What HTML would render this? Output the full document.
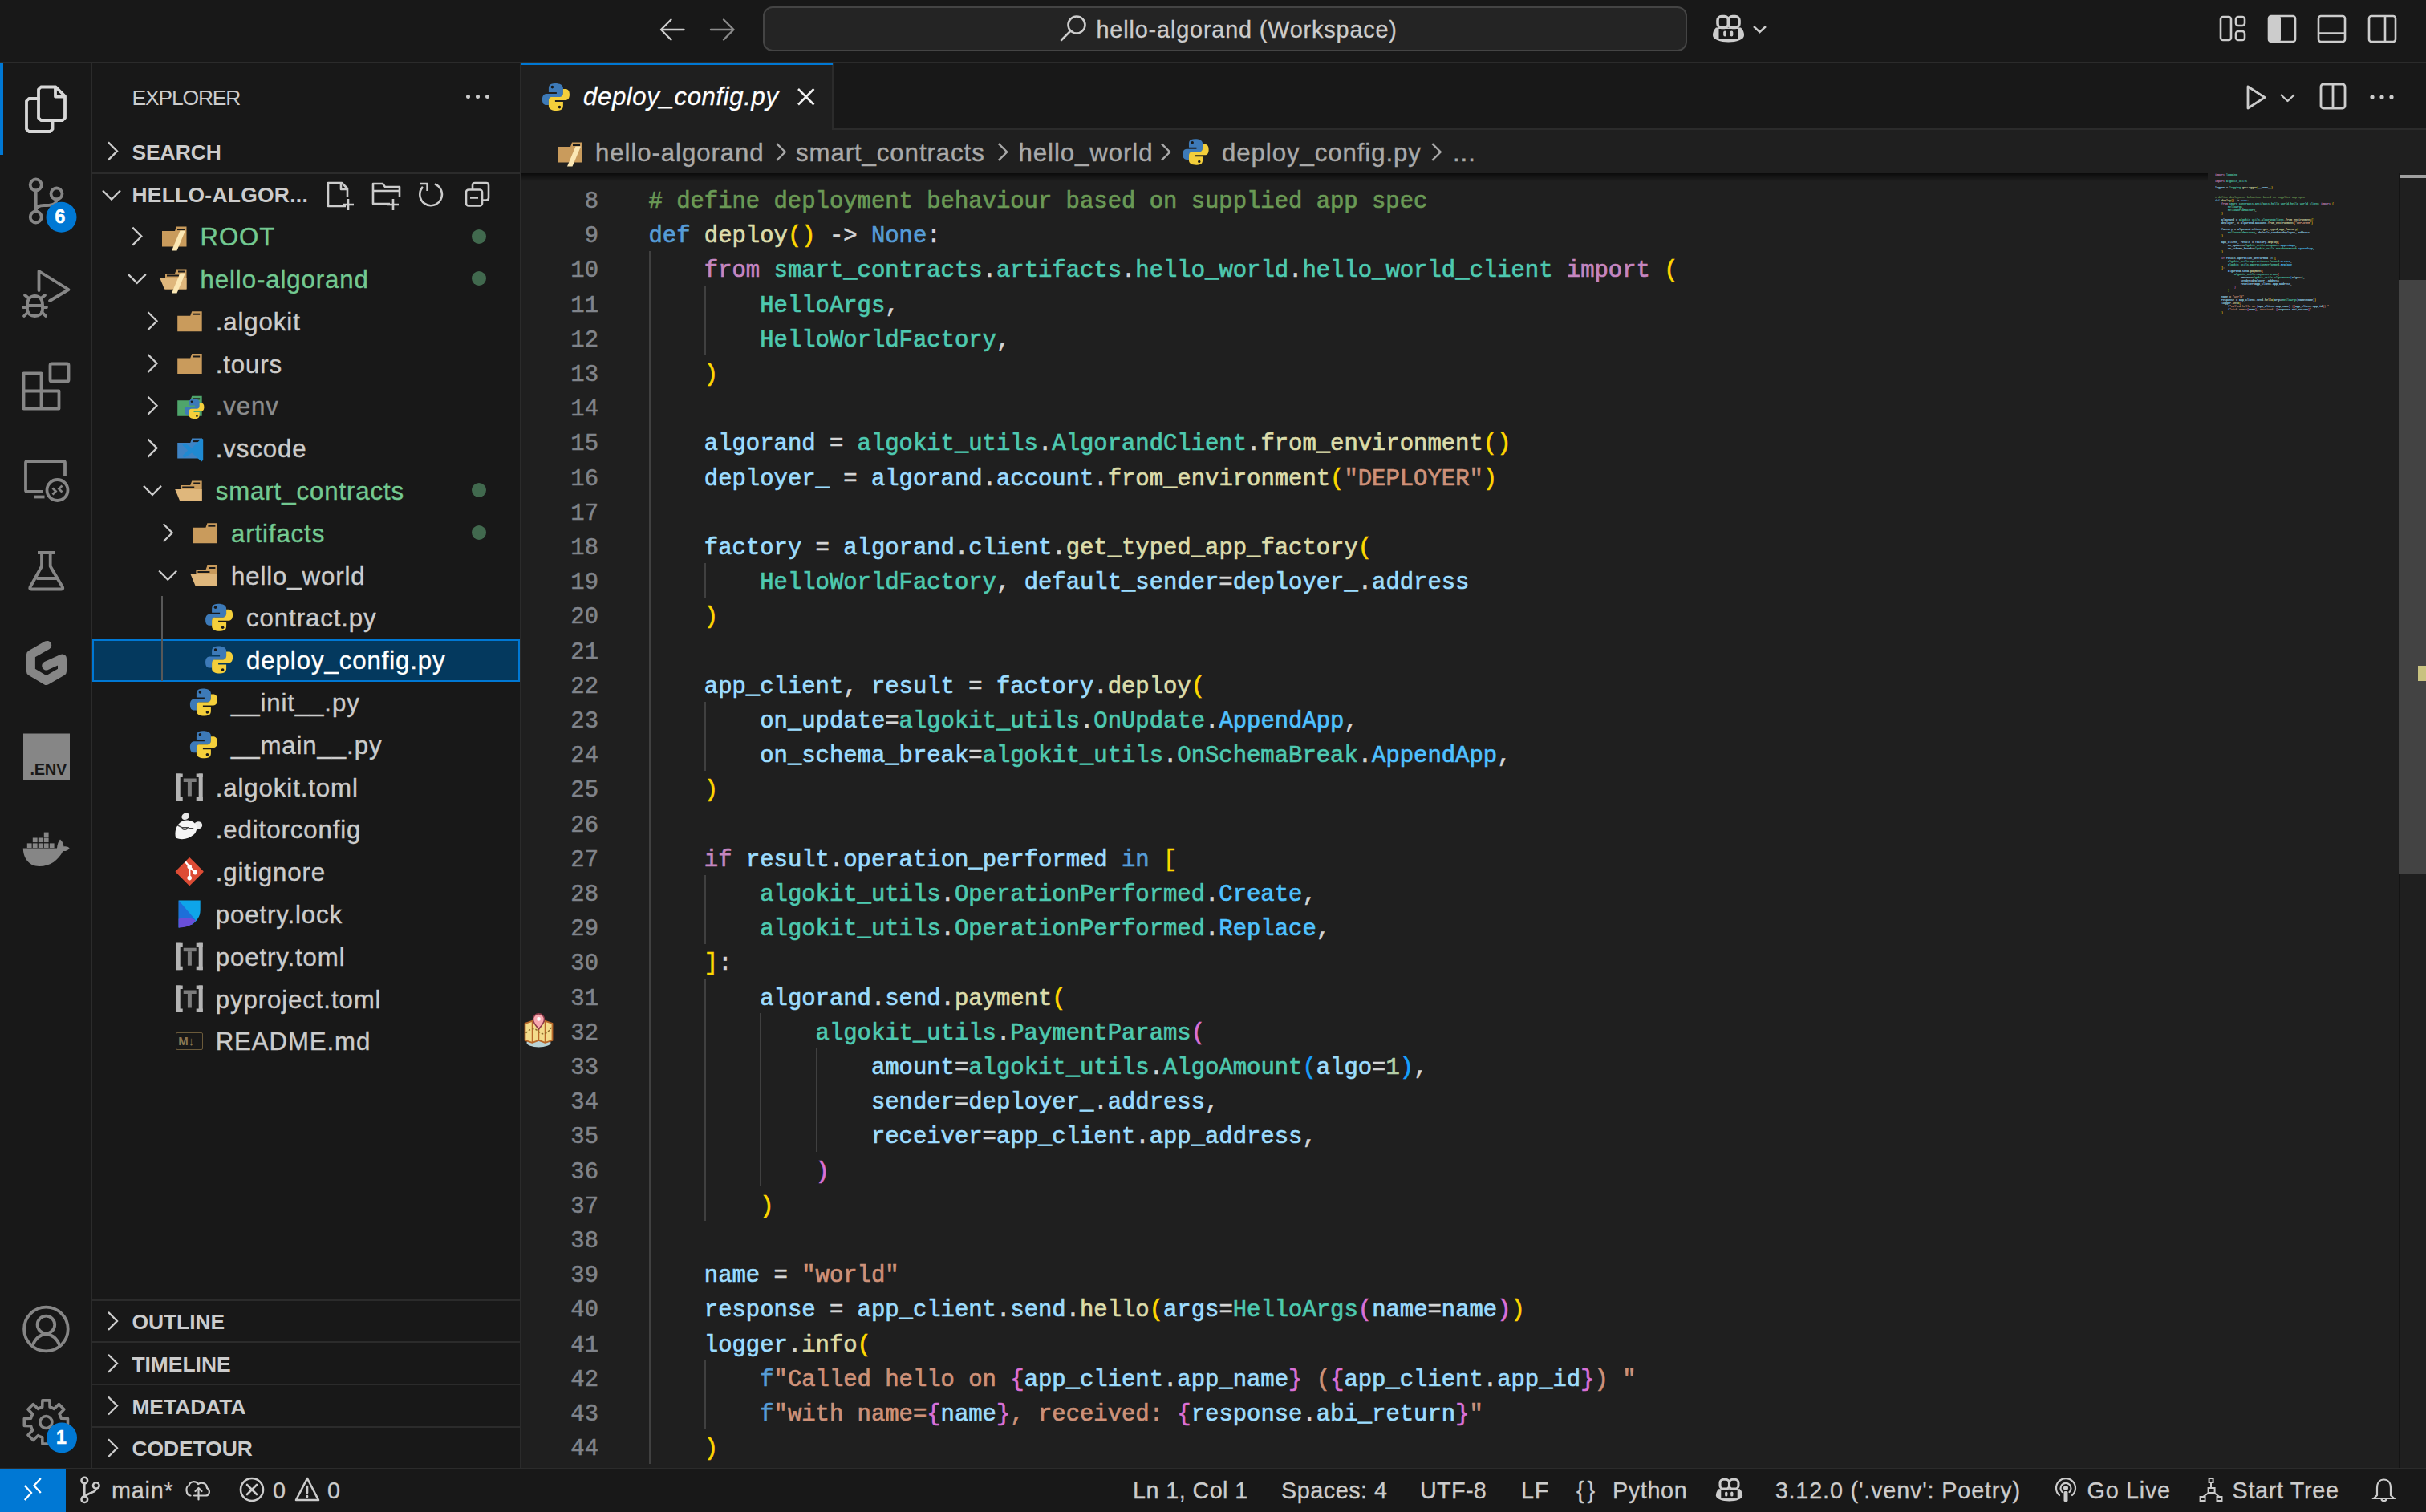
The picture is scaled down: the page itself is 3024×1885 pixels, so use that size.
<!DOCTYPE html>
<html><head><meta charset="utf-8"><title>VS Code - deploy_config.py</title>
<style>
*{margin:0;padding:0;box-sizing:border-box}
html,body{width:3024px;height:1885px;overflow:hidden;background:#181818;font-family:"Liberation Sans", sans-serif;color:#cccccc}
.a{position:absolute}
.t{position:absolute;white-space:pre;line-height:1}
svg{position:absolute;overflow:visible}
.code{position:absolute;left:0;white-space:pre;font-family:"Liberation Mono", monospace;font-size:28.9px;line-height:43.2px;height:43.2px;color:#d4d4d4;-webkit-text-stroke:0.7px currentColor;padding-top:3.5px}
.ln{position:absolute;white-space:pre;font-family:"Liberation Mono", monospace;font-size:28.9px;line-height:43.2px;height:43.2px;color:#80848b;text-align:right;width:120px;-webkit-text-stroke:0.5px currentColor;padding-top:3.5px}
.row{position:absolute;left:0;width:533px;height:52.8px}
.lbl{position:absolute;white-space:pre;font-size:31.2px;letter-spacing:0.9px;line-height:52.8px;top:0;color:#cccccc;padding-top:2px;-webkit-text-stroke:0.4px currentColor}
.hdr{position:absolute;white-space:pre;font-size:26.4px;font-weight:bold;line-height:52.8px;color:#cccccc}
.sb{position:absolute;white-space:pre;font-size:28.8px;letter-spacing:0.8px;line-height:52px;top:1832px;color:#cccccc;-webkit-text-stroke:0.3px currentColor}
.k{color:#569cd6} .f{color:#dcdcaa} .c{color:#c586c0} .ty{color:#4ec9b0} .v{color:#9cdcfe} .s{color:#ce9178}
.n{color:#b5cea8} .b1{color:#ffd700} .b2{color:#da70d6} .b3{color:#179fff} .cm{color:#6a9955} .en{color:#4fc1ff}
</style></head>
<body>
<div class="a" style="left:0;top:0;width:3024px;height:77px;background:#181818"></div>
<div class="a" style="left:0;top:77px;width:3024px;height:2px;background:#2b2b2b"></div>
<div class="a" style="left:0;top:79px;width:113px;height:1751px;background:#181818"></div>
<div class="a" style="left:113px;top:79px;width:2px;height:1751px;background:#2b2b2b"></div>
<div class="a" style="left:115px;top:79px;width:533px;height:1751px;background:#181818"></div>
<div class="a" style="left:648px;top:79px;width:2px;height:1751px;background:#2b2b2b"></div>
<div class="a" style="left:650px;top:79px;width:2374px;height:83px;background:#181818"></div>
<div class="a" style="left:1038px;top:160px;width:1986px;height:2px;background:#2b2b2b"></div>
<div class="a" style="left:650px;top:79px;width:388px;height:83px;background:#1f1f1f"></div>
<div class="a" style="left:1037px;top:79px;width:2px;height:83px;background:#2b2b2b"></div>
<div class="a" style="left:650px;top:78px;width:388px;height:3px;background:#0078d4"></div>
<div class="a" style="left:650px;top:162px;width:2374px;height:1668px;background:#1f1f1f"></div>
<div class="a" style="left:0;top:1830px;width:3024px;height:2px;background:#2b2b2b"></div>
<div class="a" style="left:0;top:1832px;width:3024px;height:53px;background:#181818"></div>
<div class="a" style="left:0;top:1832px;width:82px;height:53px;background:#0078d4"></div>
<div class="a" style="left:808.5px;top:312.9px;width:2px;height:1512.0px;background:#404040"></div>
<div class="a" style="left:877.9px;top:356.1px;width:2px;height:86.4px;background:#404040"></div>
<div class="a" style="left:877.9px;top:701.7px;width:2px;height:43.2px;background:#404040"></div>
<div class="a" style="left:877.9px;top:874.5px;width:2px;height:86.4px;background:#404040"></div>
<div class="a" style="left:877.9px;top:1090.5px;width:2px;height:86.4px;background:#404040"></div>
<div class="a" style="left:877.9px;top:1220.1px;width:2px;height:302.4px;background:#404040"></div>
<div class="a" style="left:947.2px;top:1263.3px;width:2px;height:216.0px;background:#404040"></div>
<div class="a" style="left:1016.6px;top:1306.5px;width:2px;height:129.6px;background:#404040"></div>
<div class="a" style="left:877.9px;top:1695.3px;width:2px;height:86.4px;background:#404040"></div>
<div class="ln" style="left:626px;top:226.5px">8</div>
<div class="code" style="left:808.5px;top:226.5px"><span class="cm"># define deployment behaviour based on supplied app spec</span></div>
<div class="ln" style="left:626px;top:269.7px">9</div>
<div class="code" style="left:808.5px;top:269.7px"><span class="k">def</span> <span class="f">deploy</span><span class="b1">()</span> -&gt; <span class="k">None</span>:</div>
<div class="ln" style="left:626px;top:312.9px">10</div>
<div class="code" style="left:808.5px;top:312.9px">    <span class="c">from</span> <span class="ty">smart_contracts</span>.<span class="ty">artifacts</span>.<span class="ty">hello_world</span>.<span class="ty">hello_world_client</span> <span class="c">import</span> <span class="b1">(</span></div>
<div class="ln" style="left:626px;top:356.1px">11</div>
<div class="code" style="left:808.5px;top:356.1px">        <span class="ty">HelloArgs</span>,</div>
<div class="ln" style="left:626px;top:399.3px">12</div>
<div class="code" style="left:808.5px;top:399.3px">        <span class="ty">HelloWorldFactory</span>,</div>
<div class="ln" style="left:626px;top:442.5px">13</div>
<div class="code" style="left:808.5px;top:442.5px">    <span class="b1">)</span></div>
<div class="ln" style="left:626px;top:485.7px">14</div>
<div class="ln" style="left:626px;top:528.9px">15</div>
<div class="code" style="left:808.5px;top:528.9px">    <span class="v">algorand</span> = <span class="ty">algokit_utils</span>.<span class="ty">AlgorandClient</span>.<span class="f">from_environment</span><span class="b1">()</span></div>
<div class="ln" style="left:626px;top:572.1px">16</div>
<div class="code" style="left:808.5px;top:572.1px">    <span class="v">deployer_</span> = <span class="v">algorand</span>.<span class="v">account</span>.<span class="f">from_environment</span><span class="b1">(</span><span class="s">&quot;DEPLOYER&quot;</span><span class="b1">)</span></div>
<div class="ln" style="left:626px;top:615.3px">17</div>
<div class="ln" style="left:626px;top:658.5px">18</div>
<div class="code" style="left:808.5px;top:658.5px">    <span class="v">factory</span> = <span class="v">algorand</span>.<span class="v">client</span>.<span class="f">get_typed_app_factory</span><span class="b1">(</span></div>
<div class="ln" style="left:626px;top:701.7px">19</div>
<div class="code" style="left:808.5px;top:701.7px">        <span class="ty">HelloWorldFactory</span>, <span class="v">default_sender</span>=<span class="v">deployer_</span>.<span class="v">address</span></div>
<div class="ln" style="left:626px;top:744.9px">20</div>
<div class="code" style="left:808.5px;top:744.9px">    <span class="b1">)</span></div>
<div class="ln" style="left:626px;top:788.1px">21</div>
<div class="ln" style="left:626px;top:831.3px">22</div>
<div class="code" style="left:808.5px;top:831.3px">    <span class="v">app_client</span>, <span class="v">result</span> = <span class="v">factory</span>.<span class="f">deploy</span><span class="b1">(</span></div>
<div class="ln" style="left:626px;top:874.5px">23</div>
<div class="code" style="left:808.5px;top:874.5px">        <span class="v">on_update</span>=<span class="ty">algokit_utils</span>.<span class="ty">OnUpdate</span>.<span class="en">AppendApp</span>,</div>
<div class="ln" style="left:626px;top:917.7px">24</div>
<div class="code" style="left:808.5px;top:917.7px">        <span class="v">on_schema_break</span>=<span class="ty">algokit_utils</span>.<span class="ty">OnSchemaBreak</span>.<span class="en">AppendApp</span>,</div>
<div class="ln" style="left:626px;top:960.9px">25</div>
<div class="code" style="left:808.5px;top:960.9px">    <span class="b1">)</span></div>
<div class="ln" style="left:626px;top:1004.1px">26</div>
<div class="ln" style="left:626px;top:1047.3px">27</div>
<div class="code" style="left:808.5px;top:1047.3px">    <span class="c">if</span> <span class="v">result</span>.<span class="v">operation_performed</span> <span class="k">in</span> <span class="b1">[</span></div>
<div class="ln" style="left:626px;top:1090.5px">28</div>
<div class="code" style="left:808.5px;top:1090.5px">        <span class="ty">algokit_utils</span>.<span class="ty">OperationPerformed</span>.<span class="en">Create</span>,</div>
<div class="ln" style="left:626px;top:1133.7px">29</div>
<div class="code" style="left:808.5px;top:1133.7px">        <span class="ty">algokit_utils</span>.<span class="ty">OperationPerformed</span>.<span class="en">Replace</span>,</div>
<div class="ln" style="left:626px;top:1176.9px">30</div>
<div class="code" style="left:808.5px;top:1176.9px">    <span class="b1">]</span>:</div>
<div class="ln" style="left:626px;top:1220.1px">31</div>
<div class="code" style="left:808.5px;top:1220.1px">        <span class="v">algorand</span>.<span class="v">send</span>.<span class="f">payment</span><span class="b1">(</span></div>
<div class="ln" style="left:626px;top:1263.3px">32</div>
<div class="code" style="left:808.5px;top:1263.3px">            <span class="ty">algokit_utils</span>.<span class="ty">PaymentParams</span><span class="b2">(</span></div>
<div class="ln" style="left:626px;top:1306.5px">33</div>
<div class="code" style="left:808.5px;top:1306.5px">                <span class="v">amount</span>=<span class="ty">algokit_utils</span>.<span class="ty">AlgoAmount</span><span class="b3">(</span><span class="v">algo</span>=<span class="n">1</span><span class="b3">)</span>,</div>
<div class="ln" style="left:626px;top:1349.7px">34</div>
<div class="code" style="left:808.5px;top:1349.7px">                <span class="v">sender</span>=<span class="v">deployer_</span>.<span class="v">address</span>,</div>
<div class="ln" style="left:626px;top:1392.9px">35</div>
<div class="code" style="left:808.5px;top:1392.9px">                <span class="v">receiver</span>=<span class="v">app_client</span>.<span class="v">app_address</span>,</div>
<div class="ln" style="left:626px;top:1436.1px">36</div>
<div class="code" style="left:808.5px;top:1436.1px">            <span class="b2">)</span></div>
<div class="ln" style="left:626px;top:1479.3px">37</div>
<div class="code" style="left:808.5px;top:1479.3px">        <span class="b1">)</span></div>
<div class="ln" style="left:626px;top:1522.5px">38</div>
<div class="ln" style="left:626px;top:1565.7px">39</div>
<div class="code" style="left:808.5px;top:1565.7px">    <span class="v">name</span> = <span class="s">&quot;world&quot;</span></div>
<div class="ln" style="left:626px;top:1608.9px">40</div>
<div class="code" style="left:808.5px;top:1608.9px">    <span class="v">response</span> = <span class="v">app_client</span>.<span class="v">send</span>.<span class="f">hello</span><span class="b1">(</span><span class="v">args</span>=<span class="ty">HelloArgs</span><span class="b2">(</span><span class="v">name</span>=<span class="v">name</span><span class="b2">)</span><span class="b1">)</span></div>
<div class="ln" style="left:626px;top:1652.1px">41</div>
<div class="code" style="left:808.5px;top:1652.1px">    <span class="v">logger</span>.<span class="f">info</span><span class="b1">(</span></div>
<div class="ln" style="left:626px;top:1695.3px">42</div>
<div class="code" style="left:808.5px;top:1695.3px">        <span class="k">f</span><span class="s">&quot;Called hello on </span><span class="b2">{</span><span class="v">app_client</span>.<span class="v">app_name</span><span class="b2">}</span><span class="s"> (</span><span class="b2">{</span><span class="v">app_client</span>.<span class="v">app_id</span><span class="b2">}</span><span class="s">) &quot;</span></div>
<div class="ln" style="left:626px;top:1738.5px">43</div>
<div class="code" style="left:808.5px;top:1738.5px">        <span class="k">f</span><span class="s">&quot;with name=</span><span class="b2">{</span><span class="v">name</span><span class="b2">}</span><span class="s">, received: </span><span class="b2">{</span><span class="v">response</span>.<span class="v">abi_return</span><span class="b2">}</span><span class="s">&quot;</span></div>
<div class="ln" style="left:626px;top:1781.7px">44</div>
<div class="code" style="left:808.5px;top:1781.7px">    <span class="b1">)</span></div>
<div class="a" style="left:650px;top:216px;width:2102px;height:10px;background:linear-gradient(#0b0b0b,rgba(31,31,31,0))"></div>
<div class="a" style="left:115px;top:797.2px;width:533px;height:52.8px;background:#04395e;border:2px solid #0078d4"></div>
<div class="a" style="left:201px;top:743.4px;width:2px;height:105.6px;background:#585858"></div>
<svg style="left:0;top:0" width="1" height="1"><path d="M165.3 283.6 L176.3 294.6 L165.3 305.6" fill="none" stroke="#cccccc" stroke-width="2.3" stroke-linecap="butt" stroke-linejoin="miter"/></svg>
<svg style="left:0;top:0" width="1" height="1"><path d="M202.0 288.1 H218.0 L220.0 282.6 H232.5 V307.6 H202.0 Z" fill="#c99b5c"/><path d="M231.0 287.6 L220.5 312.6 L214.0 312.6 L224.5 287.6 Z" fill="#fbe7b4" stroke="none"/><path d="M221.0 286.1 H230.0" stroke="#1a1a1a" stroke-width="2"/></svg>
<div class="lbl" style="left:249.5px;top:268.2px;color:#73c991">ROOT</div>
<div class="a" style="left:588px;top:285.6px;width:18px;height:18px;border-radius:50%;background:#41694e"></div>
<svg style="left:0;top:0" width="1" height="1"><path d="M159.8 341.9 L170.8 352.9 L181.8 341.9" fill="none" stroke="#cccccc" stroke-width="2.3" stroke-linecap="butt" stroke-linejoin="miter"/></svg>
<svg style="left:0;top:0" width="1" height="1"><path d="M206.0 340.9 H218.0 L220.0 335.4 H232.5 V360.4 H206.0 Z" fill="#c99b5c"/><path d="M208.0 343.4 H223.0 M222.0 338.4 H230.0" stroke="#1a1a1a" stroke-width="2"/><path d="M199.0 345.9 H232.5 V360.4 H205.0 Z" fill="#dfb77c"/><path d="M231.0 340.4 L220.5 365.4 L214.0 365.4 L224.5 340.4 Z" fill="#fbe7b4"/></svg>
<div class="lbl" style="left:249.5px;top:321.0px;color:#73c991">hello-algorand</div>
<div class="a" style="left:588px;top:338.4px;width:18px;height:18px;border-radius:50%;background:#41694e"></div>
<svg style="left:0;top:0" width="1" height="1"><path d="M184.5 389.2 L195.5 400.2 L184.5 411.2" fill="none" stroke="#cccccc" stroke-width="2.3" stroke-linecap="butt" stroke-linejoin="miter"/></svg>
<svg style="left:0;top:0" width="1" height="1"><path d="M221.2 393.7 H237.2 L239.2 388.2 H251.7 V413.2 H221.2 Z" fill="#c99b5c"/><path d="M240.2 391.7 H249.2" stroke="#1a1a1a" stroke-width="2"/></svg>
<div class="lbl" style="left:268.7px;top:373.8px">.algokit</div>
<svg style="left:0;top:0" width="1" height="1"><path d="M184.5 442.0 L195.5 453.0 L184.5 464.0" fill="none" stroke="#cccccc" stroke-width="2.3" stroke-linecap="butt" stroke-linejoin="miter"/></svg>
<svg style="left:0;top:0" width="1" height="1"><path d="M221.2 446.5 H237.2 L239.2 441.0 H251.7 V466.0 H221.2 Z" fill="#c99b5c"/><path d="M240.2 444.5 H249.2" stroke="#1a1a1a" stroke-width="2"/></svg>
<div class="lbl" style="left:268.7px;top:426.6px">.tours</div>
<svg style="left:0;top:0" width="1" height="1"><path d="M184.5 494.8 L195.5 505.8 L184.5 516.8" fill="none" stroke="#cccccc" stroke-width="2.3" stroke-linecap="butt" stroke-linejoin="miter"/></svg>
<svg style="left:0;top:0" width="1" height="1"><path d="M221.2 499.3 H237.2 L239.2 493.8 H251.7 V518.8 H221.2 Z" fill="#4fa56b"/><path d="M240.2 497.3 H249.2" stroke="#1a1a1a" stroke-width="2"/></svg>
<svg style="left:0;top:0" width="1" height="1"><g transform="translate(242.2,509.8) scale(0.72)"><path d="M-1 -17 C-9 -17 -9 -13 -9 -10 V-6 H1 V-4 H-12 C-16 -4 -17 0 -17 3 C-17 8 -15 10 -12 10 H-9 V5 C-9 2 -7 0 -4 0 H5 C8 0 9 -2 9 -5 V-11 C9 -15 5 -17 -1 -17 Z" fill="#3d7ab8"/><path d="M1 17 C9 17 9 13 9 10 V6 H-1 V4 H12 C16 4 17 0 17 -3 C17 -8 15 -10 12 -10 H9 V-5 C9 -2 7 0 4 0 H-5 C-8 0 -9 2 -9 5 V11 C-9 15 -5 17 1 17 Z" fill="#f4cf3b"/><circle cx="-4.5" cy="-12.5" r="1.8" fill="#181818"/><circle cx="4.5" cy="12.5" r="1.8" fill="#181818"/></g></svg>
<div class="lbl" style="left:268.7px;top:479.4px;color:#8c8c8c">.venv</div>
<svg style="left:0;top:0" width="1" height="1"><path d="M184.5 547.6 L195.5 558.6 L184.5 569.6" fill="none" stroke="#cccccc" stroke-width="2.3" stroke-linecap="butt" stroke-linejoin="miter"/></svg>
<svg style="left:0;top:0" width="1" height="1"><path d="M221.2 552.1 H237.2 L239.2 546.6 H251.7 V571.6 H221.2 Z" fill="#3f83c4"/><path d="M240.2 550.1 H249.2" stroke="#1a1a1a" stroke-width="2"/></svg>
<svg style="left:0;top:0" width="1" height="1"><path d="M251.2 546.6 L239.2 558.6 L230.2 552.6 L227.2 554.6 L234.2 561.6 L227.2 568.6 L230.2 570.6 L239.2 564.6 L251.2 575.6 L253.2 573.6 V547.6 Z" fill="#1f8ad2"/></svg>
<div class="lbl" style="left:268.7px;top:532.2px">.vscode</div>
<svg style="left:0;top:0" width="1" height="1"><path d="M179.0 605.9 L190.0 616.9 L201.0 605.9" fill="none" stroke="#cccccc" stroke-width="2.3" stroke-linecap="butt" stroke-linejoin="miter"/></svg>
<svg style="left:0;top:0" width="1" height="1"><path d="M225.2 604.9 H237.2 L239.2 599.4 H251.7 V624.4 H225.2 Z" fill="#c99b5c"/><path d="M227.2 607.4 H242.2 M241.2 602.4 H249.2" stroke="#1a1a1a" stroke-width="2"/><path d="M218.2 609.9 H251.7 V624.4 H224.2 Z" fill="#dfb77c"/></svg>
<div class="lbl" style="left:268.7px;top:585.0px;color:#73c991">smart_contracts</div>
<div class="a" style="left:588px;top:602.4px;width:18px;height:18px;border-radius:50%;background:#41694e"></div>
<svg style="left:0;top:0" width="1" height="1"><path d="M203.7 653.2 L214.7 664.2 L203.7 675.2" fill="none" stroke="#cccccc" stroke-width="2.3" stroke-linecap="butt" stroke-linejoin="miter"/></svg>
<svg style="left:0;top:0" width="1" height="1"><path d="M240.4 657.7 H256.4 L258.4 652.2 H270.9 V677.2 H240.4 Z" fill="#c99b5c"/><path d="M259.4 655.7 H268.4" stroke="#1a1a1a" stroke-width="2"/></svg>
<div class="lbl" style="left:287.9px;top:637.8px;color:#73c991">artifacts</div>
<div class="a" style="left:588px;top:655.2px;width:18px;height:18px;border-radius:50%;background:#41694e"></div>
<svg style="left:0;top:0" width="1" height="1"><path d="M198.2 711.5 L209.2 722.5 L220.2 711.5" fill="none" stroke="#cccccc" stroke-width="2.3" stroke-linecap="butt" stroke-linejoin="miter"/></svg>
<svg style="left:0;top:0" width="1" height="1"><path d="M244.4 710.5 H256.4 L258.4 705.0 H270.9 V730.0 H244.4 Z" fill="#c99b5c"/><path d="M246.4 713.0 H261.4 M260.4 708.0 H268.4" stroke="#1a1a1a" stroke-width="2"/><path d="M237.4 715.5 H270.9 V730.0 H243.4 Z" fill="#dfb77c"/></svg>
<div class="lbl" style="left:287.9px;top:690.6px">hello_world</div>
<svg style="left:0;top:0" width="1" height="1"><g transform="translate(273.1,769.8) scale(1.0)"><path d="M-1 -17 C-9 -17 -9 -13 -9 -10 V-6 H1 V-4 H-12 C-16 -4 -17 0 -17 3 C-17 8 -15 10 -12 10 H-9 V5 C-9 2 -7 0 -4 0 H5 C8 0 9 -2 9 -5 V-11 C9 -15 5 -17 -1 -17 Z" fill="#3d7ab8"/><path d="M1 17 C9 17 9 13 9 10 V6 H-1 V4 H12 C16 4 17 0 17 -3 C17 -8 15 -10 12 -10 H9 V-5 C9 -2 7 0 4 0 H-5 C-8 0 -9 2 -9 5 V11 C-9 15 -5 17 1 17 Z" fill="#f4cf3b"/><circle cx="-4.5" cy="-12.5" r="1.8" fill="#181818"/><circle cx="4.5" cy="12.5" r="1.8" fill="#181818"/></g></svg>
<div class="lbl" style="left:307.1px;top:743.4px">contract.py</div>
<svg style="left:0;top:0" width="1" height="1"><g transform="translate(273.1,822.6) scale(1.0)"><path d="M-1 -17 C-9 -17 -9 -13 -9 -10 V-6 H1 V-4 H-12 C-16 -4 -17 0 -17 3 C-17 8 -15 10 -12 10 H-9 V5 C-9 2 -7 0 -4 0 H5 C8 0 9 -2 9 -5 V-11 C9 -15 5 -17 -1 -17 Z" fill="#3d7ab8"/><path d="M1 17 C9 17 9 13 9 10 V6 H-1 V4 H12 C16 4 17 0 17 -3 C17 -8 15 -10 12 -10 H9 V-5 C9 -2 7 0 4 0 H-5 C-8 0 -9 2 -9 5 V11 C-9 15 -5 17 1 17 Z" fill="#f4cf3b"/><circle cx="-4.5" cy="-12.5" r="1.8" fill="#181818"/><circle cx="4.5" cy="12.5" r="1.8" fill="#181818"/></g></svg>
<div class="lbl" style="left:307.1px;top:796.2px;color:#ffffff">deploy_config.py</div>
<svg style="left:0;top:0" width="1" height="1"><g transform="translate(253.9,875.4) scale(1.0)"><path d="M-1 -17 C-9 -17 -9 -13 -9 -10 V-6 H1 V-4 H-12 C-16 -4 -17 0 -17 3 C-17 8 -15 10 -12 10 H-9 V5 C-9 2 -7 0 -4 0 H5 C8 0 9 -2 9 -5 V-11 C9 -15 5 -17 -1 -17 Z" fill="#3d7ab8"/><path d="M1 17 C9 17 9 13 9 10 V6 H-1 V4 H12 C16 4 17 0 17 -3 C17 -8 15 -10 12 -10 H9 V-5 C9 -2 7 0 4 0 H-5 C-8 0 -9 2 -9 5 V11 C-9 15 -5 17 1 17 Z" fill="#f4cf3b"/><circle cx="-4.5" cy="-12.5" r="1.8" fill="#181818"/><circle cx="4.5" cy="12.5" r="1.8" fill="#181818"/></g></svg>
<div class="lbl" style="left:287.9px;top:849.0px">__init__.py</div>
<svg style="left:0;top:0" width="1" height="1"><g transform="translate(253.9,928.2) scale(1.0)"><path d="M-1 -17 C-9 -17 -9 -13 -9 -10 V-6 H1 V-4 H-12 C-16 -4 -17 0 -17 3 C-17 8 -15 10 -12 10 H-9 V5 C-9 2 -7 0 -4 0 H5 C8 0 9 -2 9 -5 V-11 C9 -15 5 -17 -1 -17 Z" fill="#3d7ab8"/><path d="M1 17 C9 17 9 13 9 10 V6 H-1 V4 H12 C16 4 17 0 17 -3 C17 -8 15 -10 12 -10 H9 V-5 C9 -2 7 0 4 0 H-5 C-8 0 -9 2 -9 5 V11 C-9 15 -5 17 1 17 Z" fill="#f4cf3b"/><circle cx="-4.5" cy="-12.5" r="1.8" fill="#181818"/><circle cx="4.5" cy="12.5" r="1.8" fill="#181818"/></g></svg>
<div class="lbl" style="left:287.9px;top:901.8px">__main__.py</div>
<svg style="left:0;top:0" width="1" height="1"><g fill="#b4b4b4"><rect x="219.7" y="964.5" width="5" height="33.5"/><rect x="219.7" y="964.5" width="8" height="4.5"/><rect x="219.7" y="993.5" width="8" height="4.5"/><rect x="247.7" y="964.5" width="5" height="33.5"/><rect x="244.7" y="964.5" width="8" height="4.5"/><rect x="244.7" y="993.5" width="8" height="4.5"/></g><g fill="#7c7c7c"><rect x="228.7" y="970.5" width="16" height="4.5"/><rect x="233.9" y="975.0" width="5" height="17.5"/></g></svg>
<div class="lbl" style="left:268.7px;top:954.6px">.algokit.toml</div>
<svg style="left:0;top:0" width="1" height="1"><g transform="translate(233.2,1033.8)"><ellipse cx="-2" cy="-16" rx="5" ry="4" transform="rotate(-30 -2 -16)" fill="#e8e8e8"/><ellipse cx="14" cy="-5" rx="5" ry="4.5" fill="#e8e8e8"/><path d="M-14 11 C-16 4 -14 -6 -6 -10 C0 -13 8 -10 11 -6 C13 -2 12 4 8 7 C2 12 -6 14 -14 11 Z" fill="#f5f5f5"/><path d="M-12 -5 L-6 -2 H2 M-6 -2 A3 2.5 0 1 0 0 -2 M2 -1 H8" stroke="#444" stroke-width="1.4" fill="none"/></g></svg>
<div class="lbl" style="left:268.7px;top:1007.4px">.editorconfig</div>
<svg style="left:0;top:0" width="1" height="1"><path d="M236.2 1070.1 L252.7 1086.6 L236.2 1103.1 L219.7 1086.6 Z" fill="#dd4c35" stroke="#dd4c35" stroke-width="2" stroke-linejoin="round"/><g stroke="#fff" stroke-width="2.4" fill="#fff"><path d="M231.2 1074.6 L236.2 1080.6 V1094.6 M236.2 1080.6 L243.2 1087.6" fill="none"/><circle cx="236.2" cy="1080.6" r="1.6"/><circle cx="236.2" cy="1094.6" r="1.6"/><circle cx="243.2" cy="1087.6" r="1.6"/></g></svg>
<div class="lbl" style="left:268.7px;top:1060.2px">.gitignore</div>
<svg style="left:0;top:0" width="1" height="1"><g transform="translate(236.2,1139.4)"><path d="M-13.5 -17 H13.5 V-5 C13.5 3 9 9 3 13 L-13.5 17 Z" fill="#0ea5e9"/><path d="M-13.5 -17 L8 8 L3 13 L-13.5 17 Z" fill="#1e6fd9"/><path d="M-13.5 6 C-5 4 2 5 8 8 L3 13 C-3 16 -9 17 -13.5 17 Z" fill="#6a4fd8"/></g></svg>
<div class="lbl" style="left:268.7px;top:1113.0px">poetry.lock</div>
<svg style="left:0;top:0" width="1" height="1"><g fill="#b4b4b4"><rect x="219.7" y="1175.7" width="5" height="33.5"/><rect x="219.7" y="1175.7" width="8" height="4.5"/><rect x="219.7" y="1204.7" width="8" height="4.5"/><rect x="247.7" y="1175.7" width="5" height="33.5"/><rect x="244.7" y="1175.7" width="8" height="4.5"/><rect x="244.7" y="1204.7" width="8" height="4.5"/></g><g fill="#7c7c7c"><rect x="228.7" y="1181.7" width="16" height="4.5"/><rect x="233.9" y="1186.2" width="5" height="17.5"/></g></svg>
<div class="lbl" style="left:268.7px;top:1165.8px">poetry.toml</div>
<svg style="left:0;top:0" width="1" height="1"><g fill="#b4b4b4"><rect x="219.7" y="1228.5" width="5" height="33.5"/><rect x="219.7" y="1228.5" width="8" height="4.5"/><rect x="219.7" y="1257.5" width="8" height="4.5"/><rect x="247.7" y="1228.5" width="5" height="33.5"/><rect x="244.7" y="1228.5" width="8" height="4.5"/><rect x="244.7" y="1257.5" width="8" height="4.5"/></g><g fill="#7c7c7c"><rect x="228.7" y="1234.5" width="16" height="4.5"/><rect x="233.9" y="1239.0" width="5" height="17.5"/></g></svg>
<div class="lbl" style="left:268.7px;top:1218.6px">pyproject.toml</div>
<div class="a" style="left:219.2px;top:1286.8px;width:34px;height:22px;border:1.5px solid #6b5a3a;border-radius:2px"></div>
<div class="t" style="left:222.2px;top:1289.8px;font-size:15px;font-weight:bold;color:#8a7550">M&#8595;</div>
<div class="lbl" style="left:268.7px;top:1271.4px">README.md</div>
<div class="t" style="left:164.4px;top:108.5px;font-size:26.4px;letter-spacing:-1.1px;color:#cccccc">EXPLORER</div>
<div class="a" style="left:580.9px;top:118.2px;width:5.2px;height:5.2px;border-radius:50%;background:#cccccc"></div>
<div class="a" style="left:593.1px;top:118.2px;width:5.2px;height:5.2px;border-radius:50%;background:#cccccc"></div>
<div class="a" style="left:605.0px;top:118.2px;width:5.2px;height:5.2px;border-radius:50%;background:#cccccc"></div>
<svg style="left:0;top:0" width="1" height="1"><path d="M135.0 177.4 L146.0 188.4 L135.0 199.4" fill="none" stroke="#cccccc" stroke-width="2.3" stroke-linecap="butt" stroke-linejoin="miter"/></svg>
<div class="hdr" style="left:164.4px;top:164px">SEARCH</div>
<div class="a" style="left:115px;top:215px;width:533px;height:2px;background:#2b2b2b"></div>
<svg style="left:0;top:0" width="1" height="1"><path d="M128.0 237.5 L139.0 248.5 L150.0 237.5" fill="none" stroke="#cccccc" stroke-width="2.3" stroke-linecap="butt" stroke-linejoin="miter"/></svg>
<div class="hdr" style="left:164.4px;top:217px;letter-spacing:0.3px">HELLO-ALGOR...</div>
<svg style="left:0;top:0" width="1" height="1"><g fill="none" stroke="#cccccc" stroke-width="2.6" stroke-linejoin="round">
<path d="M431 257 H409 V228 H426 L433 235 V246"/><path d="M425 228 V236 H433"/>
<path d="M434 248 V262 M427 255 H441"/>
<path d="M486 254 H465 V229 H477 L480 233 H498 V246"/><path d="M465 238 H498"/>
<path d="M490 248 V262 M483 255 H497"/>
<path d="M542 229.5 A13.8 13.8 0 1 1 527 233"/><path d="M524 229 H532.6 V238"/>
<rect x="581" y="236.5" width="20" height="20" rx="3"/><path d="M589 236.5 V231 Q589 228 592 228 H606 Q609 228 609 231 V246.5 Q609 249.5 606 249.5 H601 M586 246.5 H596"/>
</g></svg>
<div class="a" style="left:115px;top:1619.5px;width:533px;height:2px;background:#2b2b2b"></div>
<svg style="left:0;top:0" width="1" height="1"><path d="M135.0 1635.9 L146.0 1646.9 L135.0 1657.9" fill="none" stroke="#cccccc" stroke-width="2.3" stroke-linecap="butt" stroke-linejoin="miter"/></svg>
<div class="hdr" style="left:164.4px;top:1622.0px">OUTLINE</div>
<div class="a" style="left:115px;top:1672.3px;width:533px;height:2px;background:#2b2b2b"></div>
<svg style="left:0;top:0" width="1" height="1"><path d="M135.0 1688.7 L146.0 1699.7 L135.0 1710.7" fill="none" stroke="#cccccc" stroke-width="2.3" stroke-linecap="butt" stroke-linejoin="miter"/></svg>
<div class="hdr" style="left:164.4px;top:1674.8px">TIMELINE</div>
<div class="a" style="left:115px;top:1725.1px;width:533px;height:2px;background:#2b2b2b"></div>
<svg style="left:0;top:0" width="1" height="1"><path d="M135.0 1741.5 L146.0 1752.5 L135.0 1763.5" fill="none" stroke="#cccccc" stroke-width="2.3" stroke-linecap="butt" stroke-linejoin="miter"/></svg>
<div class="hdr" style="left:164.4px;top:1727.6px">METADATA</div>
<div class="a" style="left:115px;top:1777.9px;width:533px;height:2px;background:#2b2b2b"></div>
<svg style="left:0;top:0" width="1" height="1"><path d="M135.0 1794.3 L146.0 1805.3 L135.0 1816.3" fill="none" stroke="#cccccc" stroke-width="2.3" stroke-linecap="butt" stroke-linejoin="miter"/></svg>
<div class="hdr" style="left:164.4px;top:1780.4px">CODETOUR</div>
<div class="a" style="left:0;top:78px;width:4px;height:115px;background:#0078d4"></div>
<svg style="left:0;top:0" width="1" height="1"><g fill="none" stroke-width="3.8" stroke-linejoin="round" stroke-linecap="round">
<path stroke="#d7d7d7" d="M48 111.5 L51 108.5 H69.5 L81 120 V147 L78 150 H51 L48 147 Z M69 109 V120.5 H81"/>
<path stroke="#d7d7d7" d="M48 123 H36 L33 126 V161 L36 164 H62.5 L65.5 161 V150"/>
<g stroke="#868686">
<circle cx="44.7" cy="230.5" r="7"/><circle cx="70.5" cy="241.5" r="7"/><circle cx="44.7" cy="270.5" r="7"/>
<path d="M44.7 237.5 V263.5 M70.5 248.5 C70.5 256 62 256 55 256 C48 256 44.7 258 44.7 263"/>
<path d="M48.5 338 V362 M48.5 338 L85.5 361 L62 375"/>
<path d="M34 380 C34 373 38 369 43.5 369 C49 369 53 373 53 380 V386 C53 391 49 394 43.5 394 C38 394 34 391 34 386 Z"/><path d="M34 381 H53 M34 383 H29 M53 383 H58 M35 389 L30 394 M52 389 L57 394 M36 372 L31 368 M51 372 L56 368"/>
<path d="M29.5 465.5 H51.5 V487.5 H73.5 V509.5 H29.5 Z M29.5 487.5 H51.5 V509.5"/><rect x="62.5" y="453.5" width="23" height="22" rx="2"/>
<path d="M53.5 613 H34 Q32 613 32 611 V577 Q32 575 34 575 H79 Q81 575 81 577 V594" stroke-linecap="butt"/><path d="M42 619.5 H55.5" stroke-linecap="butt"/>
<circle cx="71.5" cy="611" r="13"/><path d="M65.5 608.5 L69.5 612.5 L65.5 616.5 M77.5 605.5 L73.5 609.5 L77.5 613.5" stroke-width="2.8" stroke-linecap="butt" stroke-linejoin="miter"/>
<path d="M47 689 H68.5 M52 689 V706 L37.5 732 Q36.5 734.5 39 734.5 H76.5 Q79 734.5 78 732 L62.7 706 V689 M45.5 721 H70.5" stroke-linecap="butt"/>
<circle cx="57.4" cy="1657" r="27.3"/><circle cx="57.4" cy="1651.5" r="10.8"/><path d="M40.5 1677.5 C44 1669 50 1663.5 57.4 1663.5 C64.8 1663.5 71 1669 74.5 1677.5"/>
<path d="M49.9 1755.0 L52.7 1754.1 L52.9 1745.9 L61.9 1745.9 L62.1 1754.1 L64.9 1755.0 L67.4 1756.3 L73.4 1750.6 L79.8 1757.0 L74.1 1763.0 L75.4 1765.5 L76.3 1768.3 L84.5 1768.5 L84.5 1777.5 L76.3 1777.7 L75.4 1780.5 L74.1 1783.0 L79.8 1789.0 L73.4 1795.4 L67.4 1789.7 L64.9 1791.0 L62.1 1791.9 L61.9 1800.1 L52.9 1800.1 L52.7 1791.9 L49.9 1791.0 L47.4 1789.7 L41.4 1795.4 L35.0 1789.0 L40.7 1783.0 L39.4 1780.5 L38.5 1777.7 L30.3 1777.5 L30.3 1768.5 L38.5 1768.3 L39.4 1765.5 L40.7 1763.0 L35.0 1757.0 L41.4 1750.6 L47.4 1756.3 Z" stroke-width="3.6"/><circle cx="57.4" cy="1773" r="7.5" stroke-width="3.6"/>
</g></g>
<path fill="none" stroke="#868686" stroke-width="11" stroke-linecap="round" stroke-linejoin="round" d="M58.7 804.4 L38.4 816 V837 L57.7 848.5 L77.5 837 V821 L57.7 830"/>
<rect x="29" y="914.5" width="58" height="58" fill="#868686"/>
<path fill="#868686" d="M28.8 1057.6 H71 C71.5 1052 73 1048.5 75 1046.5 C78 1049 79 1052.5 79.5 1055.5 C82 1055 85 1055.5 86.6 1057.5 C84.5 1060.5 81.5 1061.5 78.5 1061 C73 1072 63 1080 48.9 1080 C36 1080 29 1070 28.8 1057.6 Z"/>
<g fill="#868686"><rect x="33.8" y="1051.4" width="5.8" height="5.6"/><rect x="40.8" y="1051.4" width="5.8" height="5.6"/><rect x="47.8" y="1051.4" width="5.8" height="5.6"/><rect x="54.8" y="1051.4" width="5.8" height="5.6"/><rect x="61.8" y="1051.4" width="5.8" height="5.6"/><rect x="40.8" y="1044.5" width="5.8" height="5.6"/><rect x="47.8" y="1044.5" width="5.8" height="5.6"/><rect x="54.8" y="1044.5" width="5.8" height="5.6"/><rect x="54.8" y="1037.6" width="5.8" height="5.6"/></g>
<circle cx="76.5" cy="270.7" r="19" fill="#0078d4"/>
<circle cx="77" cy="1792.5" r="19" fill="#0078d4"/>
</svg>
<div class="t" style="left:37.5px;top:948.5px;font-size:20px;font-weight:bold;color:#181818;letter-spacing:-0.3px">.ENV</div>
<div class="t" style="left:68.5px;top:259px;font-size:23px;font-weight:bold;color:#ffffff;-webkit-text-stroke:0.6px #fff">6</div>
<div class="t" style="left:70px;top:1781px;font-size:23px;font-weight:bold;color:#ffffff;-webkit-text-stroke:0.6px #fff">1</div>
<svg style="left:0;top:0" width="1" height="1"><g fill="none" stroke-width="2.8" stroke-linecap="round" stroke-linejoin="round">
<path stroke="#cccccc" stroke-width="2.4" d="M824 37 H852.5 M836.5 24.5 L824 37 L836.5 49.5"/>
<path stroke="#8b8b8b" stroke-width="2.4" d="M886 37 H914.5 M902 24.5 L914.5 37 L902 49.5"/>
</g></svg>
<div class="a" style="left:951px;top:8px;width:1152px;height:56px;border-radius:12px;background:#242424;border:2px solid #444444"></div>
<svg style="left:0;top:0" width="1" height="1"><g fill="none" stroke="#cccccc" stroke-width="2.6" stroke-linecap="round"><circle cx="1342" cy="31" r="10.5"/><path d="M1334.5 38.5 L1323 50"/></g></svg>
<div class="t" style="left:1366.5px;top:23px;font-size:28.8px;letter-spacing:0.85px;color:#cccccc;-webkit-text-stroke:0.3px currentColor">hello-algorand (Workspace)</div>
<svg style="left:0;top:0" width="1" height="1"><g transform="translate(2154.5,35.5) scale(1.0)">
<path d="M-15.5 -1 C-18.5 2 -19.5 5 -19.5 8.5 C-19.5 14 -10 17 0 17 C10 17 19.5 14 19.5 8.5 C19.5 5 18.5 2 15.5 -1 Z" fill="#cccccc"/>
<rect x="-12" y="0.5" width="24" height="12.5" fill="#181818"/>
<rect x="-13.5" y="-15" width="13.5" height="14" rx="5" fill="none" stroke="#cccccc" stroke-width="3.6"/>
<rect x="0" y="-15" width="13.5" height="14" rx="5" fill="none" stroke="#cccccc" stroke-width="3.6"/>
<rect x="-6.3" y="3" width="3.8" height="7" rx="1.9" fill="#cccccc"/><rect x="2" y="3" width="3.8" height="7" rx="1.9" fill="#cccccc"/>
</g></svg>
<svg style="left:0;top:0" width="1" height="1"><path d="M2186 33 L2193.5 40 L2201 33" fill="none" stroke="#cccccc" stroke-width="2.4"/></svg>
<svg style="left:0;top:0" width="1" height="1"><g fill="none" stroke="#cccccc" stroke-width="2.6" stroke-linejoin="round">
<rect x="2768" y="21" width="13" height="29" rx="3"/><rect x="2787" y="21" width="11" height="11" rx="3"/><rect x="2787" y="39" width="11" height="11" rx="3"/>
<rect x="2828" y="20" width="33" height="32" rx="3"/>
<rect x="2890" y="20" width="33" height="32" rx="3"/><path d="M2890 41.5 H2923"/>
<rect x="2953" y="20" width="33" height="32" rx="3"/><path d="M2973 20 V52"/>
</g><rect x="2828" y="20" width="15" height="32" rx="3" fill="#cccccc"/></svg>
<svg style="left:0;top:0" width="1" height="1"><g transform="translate(692.9,121.1) scale(1.0)"><path d="M-1 -17 C-9 -17 -9 -13 -9 -10 V-6 H1 V-4 H-12 C-16 -4 -17 0 -17 3 C-17 8 -15 10 -12 10 H-9 V5 C-9 2 -7 0 -4 0 H5 C8 0 9 -2 9 -5 V-11 C9 -15 5 -17 -1 -17 Z" fill="#3d7ab8"/><path d="M1 17 C9 17 9 13 9 10 V6 H-1 V4 H12 C16 4 17 0 17 -3 C17 -8 15 -10 12 -10 H9 V-5 C9 -2 7 0 4 0 H-5 C-8 0 -9 2 -9 5 V11 C-9 15 -5 17 1 17 Z" fill="#f4cf3b"/><circle cx="-4.5" cy="-12.5" r="1.8" fill="#181818"/><circle cx="4.5" cy="12.5" r="1.8" fill="#181818"/></g></svg>
<div class="t" style="left:727px;top:105px;font-size:31.2px;font-style:italic;letter-spacing:0.6px;color:#ffffff;-webkit-text-stroke:0.3px currentColor">deploy_config.py</div>
<svg style="left:0;top:0" width="1" height="1"><path d="M995 111 L1014.5 130.5 M1014.5 111 L995 130.5" stroke="#f0f0f0" stroke-width="2.6" stroke-linecap="butt"/></svg>
<svg style="left:0;top:0" width="1" height="1"><g fill="none" stroke="#cccccc" stroke-width="2.8" stroke-linejoin="round">
<path d="M2802 108 L2823 121.5 L2802 135 Z"/>
<path d="M2843 118 L2851.5 126 L2860 118" stroke-width="2.4"/>
<rect x="2893" y="105" width="30" height="30" rx="3"/><path d="M2908 105 V135"/>
</g><g fill="#cccccc"><circle cx="2957" cy="121" r="2.6"/><circle cx="2969" cy="121" r="2.6"/><circle cx="2981" cy="121" r="2.6"/></g></svg>
<svg style="left:0;top:0" width="1" height="1"><path d="M695.0 183.0 H711.0 L713.0 177.5 H725.5 V202.5 H695.0 Z" fill="#c99b5c"/><path d="M724.0 182.5 L713.5 207.5 L707.0 207.5 L717.5 182.5 Z" fill="#fbe7b4" stroke="none"/><path d="M714.0 181.0 H723.0" stroke="#1a1a1a" stroke-width="2"/></svg>
<div class="t" style="left:742px;top:175px;font-size:31.2px;letter-spacing:0.92px;color:#a9a9a9;-webkit-text-stroke:0.4px currentColor">hello-algorand</div>
<svg style="left:0;top:0" width="1" height="1"><path d="M968.3 179.1 L978.7 189.5 L968.3 199.9" fill="none" stroke="#a9a9a9" stroke-width="2.4" stroke-linecap="butt" stroke-linejoin="miter"/></svg>
<div class="t" style="left:992px;top:175px;font-size:31.2px;letter-spacing:0.92px;color:#a9a9a9;-webkit-text-stroke:0.4px currentColor">smart_contracts</div>
<svg style="left:0;top:0" width="1" height="1"><path d="M1244.8 179.1 L1255.2 189.5 L1244.8 199.9" fill="none" stroke="#a9a9a9" stroke-width="2.4" stroke-linecap="butt" stroke-linejoin="miter"/></svg>
<div class="t" style="left:1269.6px;top:175px;font-size:31.2px;letter-spacing:0.92px;color:#a9a9a9;-webkit-text-stroke:0.4px currentColor">hello_world</div>
<svg style="left:0;top:0" width="1" height="1"><path d="M1447.8 179.1 L1458.2 189.5 L1447.8 199.9" fill="none" stroke="#a9a9a9" stroke-width="2.4" stroke-linecap="butt" stroke-linejoin="miter"/></svg>
<svg style="left:0;top:0" width="1" height="1"><g transform="translate(1490.5,189.5) scale(0.95)"><path d="M-1 -17 C-9 -17 -9 -13 -9 -10 V-6 H1 V-4 H-12 C-16 -4 -17 0 -17 3 C-17 8 -15 10 -12 10 H-9 V5 C-9 2 -7 0 -4 0 H5 C8 0 9 -2 9 -5 V-11 C9 -15 5 -17 -1 -17 Z" fill="#3d7ab8"/><path d="M1 17 C9 17 9 13 9 10 V6 H-1 V4 H12 C16 4 17 0 17 -3 C17 -8 15 -10 12 -10 H9 V-5 C9 -2 7 0 4 0 H-5 C-8 0 -9 2 -9 5 V11 C-9 15 -5 17 1 17 Z" fill="#f4cf3b"/><circle cx="-4.5" cy="-12.5" r="1.8" fill="#181818"/><circle cx="4.5" cy="12.5" r="1.8" fill="#181818"/></g></svg>
<div class="t" style="left:1523px;top:175px;font-size:31.2px;letter-spacing:0.92px;color:#a9a9a9;-webkit-text-stroke:0.4px currentColor">deploy_config.py</div>
<svg style="left:0;top:0" width="1" height="1"><path d="M1785.3 179.1 L1795.7 189.5 L1785.3 199.9" fill="none" stroke="#a9a9a9" stroke-width="2.4" stroke-linecap="butt" stroke-linejoin="miter"/></svg>
<div class="t" style="left:1811px;top:175px;font-size:31.2px;letter-spacing:0.92px;color:#a9a9a9;-webkit-text-stroke:0.4px currentColor">...</div>
<div class="sb" style="left:139px">main*</div>
<div class="sb" style="left:340px">0</div>
<div class="sb" style="left:408px">0</div>
<div class="sb" style="left:1412px;letter-spacing:0.4px">Ln 1, Col 1</div>
<div class="sb" style="left:1597px;letter-spacing:0.5px">Spaces: 4</div>
<div class="sb" style="left:1770px;letter-spacing:0.3px">UTF-8</div>
<div class="sb" style="left:1896px">LF</div>
<div class="sb" style="left:1965px;letter-spacing:-2px">{ }</div>
<div class="sb" style="left:2010px;letter-spacing:0.6px">Python</div>
<div class="sb" style="left:2212.7px;letter-spacing:0.83px">3.12.0 (&#x27;.venv&#x27;: Poetry)</div>
<div class="sb" style="left:2601.6px;letter-spacing:0.7px">Go Live</div>
<div class="sb" style="left:2782.5px;letter-spacing:0.67px">Start Tree</div>
<svg style="left:0;top:0" width="1" height="1"><g transform="translate(2155.5,1857) scale(0.85)">
<path d="M-15.5 -1 C-18.5 2 -19.5 5 -19.5 8.5 C-19.5 14 -10 17 0 17 C10 17 19.5 14 19.5 8.5 C19.5 5 18.5 2 15.5 -1 Z" fill="#cccccc"/>
<rect x="-12" y="0.5" width="24" height="12.5" fill="#181818"/>
<rect x="-13.5" y="-15" width="13.5" height="14" rx="5" fill="none" stroke="#cccccc" stroke-width="3.6"/>
<rect x="0" y="-15" width="13.5" height="14" rx="5" fill="none" stroke="#cccccc" stroke-width="3.6"/>
<rect x="-6.3" y="3" width="3.8" height="7" rx="1.9" fill="#cccccc"/><rect x="2" y="3" width="3.8" height="7" rx="1.9" fill="#cccccc"/>
</g></svg>
<svg style="left:0;top:0" width="1" height="1"><g fill="none" stroke="#cccccc" stroke-width="2.6" stroke-linecap="round" stroke-linejoin="round">
<path d="M30.8 1852 L39 1861 L30.8 1870" stroke="#ffffff" stroke-width="2.3" stroke-linecap="butt" stroke-linejoin="miter"/><path d="M50.8 1843 L42.5 1852 L50.8 1861" stroke="#ffffff" stroke-width="2.3" stroke-linecap="butt" stroke-linejoin="miter"/>
<circle cx="105.3" cy="1845.6" r="3.8"/><circle cx="105.3" cy="1869.2" r="3.8"/><circle cx="119.8" cy="1852" r="3.8"/><path d="M105.3 1849.4 V1865.4 M119.8 1855.8 C119.8 1861 111 1860 106 1865.5"/>
<path d="M242 1864.5 H256 C261.5 1864.5 262.5 1857.5 258 1855 C258 1850 252 1846.5 247 1850 C244 1846 237 1846 235.5 1852 C231 1852.5 231.5 1864.5 237.5 1864.5" stroke-width="2.2"/><path d="M247.5 1869.5 V1855 M243.5 1859 L247.5 1855 L251.5 1859" stroke-width="2.2"/>
<circle cx="314" cy="1857" r="14"/><path d="M308 1851 L320 1863 M320 1851 L308 1863"/>
<path d="M383 1843 L397 1870 H369 Z"/><path d="M383 1853 V1861 M383 1865 V1866"/>
<path d="M2567 1864 A12 12 0 1 1 2583 1864" stroke-width="2.2"/><path d="M2570.5 1860 A6.5 6.5 0 1 1 2579.5 1860" stroke-width="2.2"/></g><g fill="#cccccc"><circle cx="2575" cy="1855" r="3"/><rect x="2572.5" y="1859" width="5" height="13" rx="1.5"/>
</g><g fill="none" stroke="#cccccc" stroke-width="2"><rect x="2753.6" y="1843" width="5" height="5"/><rect x="2752.6" y="1855" width="8" height="6"/><rect x="2742.6" y="1866" width="6" height="5"/><rect x="2763.5" y="1866" width="6" height="5"/><path d="M2756 1848 V1855 M2753 1861 L2746 1866 M2760 1861 L2766.5 1866"/>
<path d="M2963 1864 V1855 C2963 1848 2966.5 1844.5 2971.5 1844.5 C2976.5 1844.5 2980 1848 2980 1855 V1864 L2984 1868 H2959 Z M2968.5 1868.5 C2968.5 1872 2974.5 1872 2974.5 1868.5" stroke-width="2.2"/>
</g></svg>
<div class="a" style="left:2761px;top:215.5px;width:2300px;height:1800px;transform:scale(0.1);transform-origin:0 0;font-family:'Liberation Mono',monospace;font-size:33.33px;font-weight:bold;color:#d4d4d4;opacity:1"><div style="position:absolute;left:0;top:0px;white-space:pre;height:40px;line-height:40px"><span class="c">import</span> <span class="ty">logging</span></div><div style="position:absolute;left:0;top:80px;white-space:pre;height:40px;line-height:40px"><span class="c">import</span> <span class="ty">algokit_utils</span></div><div style="position:absolute;left:0;top:160px;white-space:pre;height:40px;line-height:40px"><span class="v">logger</span> = <span class="ty">logging</span>.<span class="f">getLogger</span><span class="b1">(</span><span class="v">__name__</span><span class="b1">)</span></div><div style="position:absolute;left:0;top:280px;white-space:pre;height:40px;line-height:40px"><span class="cm"># define deployment behaviour based on supplied app spec</span></div><div style="position:absolute;left:0;top:320px;white-space:pre;height:40px;line-height:40px"><span class="k">def</span> <span class="f">deploy</span><span class="b1">()</span> -&gt; <span class="k">None</span>:</div><div style="position:absolute;left:0;top:360px;white-space:pre;height:40px;line-height:40px">    <span class="c">from</span> <span class="ty">smart_contracts</span>.<span class="ty">artifacts</span>.<span class="ty">hello_world</span>.<span class="ty">hello_world_client</span> <span class="c">import</span> <span class="b1">(</span></div><div style="position:absolute;left:0;top:400px;white-space:pre;height:40px;line-height:40px">        <span class="ty">HelloArgs</span>,</div><div style="position:absolute;left:0;top:440px;white-space:pre;height:40px;line-height:40px">        <span class="ty">HelloWorldFactory</span>,</div><div style="position:absolute;left:0;top:480px;white-space:pre;height:40px;line-height:40px">    <span class="b1">)</span></div><div style="position:absolute;left:0;top:560px;white-space:pre;height:40px;line-height:40px">    <span class="v">algorand</span> = <span class="ty">algokit_utils</span>.<span class="ty">AlgorandClient</span>.<span class="f">from_environment</span><span class="b1">()</span></div><div style="position:absolute;left:0;top:600px;white-space:pre;height:40px;line-height:40px">    <span class="v">deployer_</span> = <span class="v">algorand</span>.<span class="v">account</span>.<span class="f">from_environment</span><span class="b1">(</span><span class="s">&quot;DEPLOYER&quot;</span><span class="b1">)</span></div><div style="position:absolute;left:0;top:680px;white-space:pre;height:40px;line-height:40px">    <span class="v">factory</span> = <span class="v">algorand</span>.<span class="v">client</span>.<span class="f">get_typed_app_factory</span><span class="b1">(</span></div><div style="position:absolute;left:0;top:720px;white-space:pre;height:40px;line-height:40px">        <span class="ty">HelloWorldFactory</span>, <span class="v">default_sender</span>=<span class="v">deployer_</span>.<span class="v">address</span></div><div style="position:absolute;left:0;top:760px;white-space:pre;height:40px;line-height:40px">    <span class="b1">)</span></div><div style="position:absolute;left:0;top:840px;white-space:pre;height:40px;line-height:40px">    <span class="v">app_client</span>, <span class="v">result</span> = <span class="v">factory</span>.<span class="f">deploy</span><span class="b1">(</span></div><div style="position:absolute;left:0;top:880px;white-space:pre;height:40px;line-height:40px">        <span class="v">on_update</span>=<span class="ty">algokit_utils</span>.<span class="ty">OnUpdate</span>.<span class="en">AppendApp</span>,</div><div style="position:absolute;left:0;top:920px;white-space:pre;height:40px;line-height:40px">        <span class="v">on_schema_break</span>=<span class="ty">algokit_utils</span>.<span class="ty">OnSchemaBreak</span>.<span class="en">AppendApp</span>,</div><div style="position:absolute;left:0;top:960px;white-space:pre;height:40px;line-height:40px">    <span class="b1">)</span></div><div style="position:absolute;left:0;top:1040px;white-space:pre;height:40px;line-height:40px">    <span class="c">if</span> <span class="v">result</span>.<span class="v">operation_performed</span> <span class="k">in</span> <span class="b1">[</span></div><div style="position:absolute;left:0;top:1080px;white-space:pre;height:40px;line-height:40px">        <span class="ty">algokit_utils</span>.<span class="ty">OperationPerformed</span>.<span class="en">Create</span>,</div><div style="position:absolute;left:0;top:1120px;white-space:pre;height:40px;line-height:40px">        <span class="ty">algokit_utils</span>.<span class="ty">OperationPerformed</span>.<span class="en">Replace</span>,</div><div style="position:absolute;left:0;top:1160px;white-space:pre;height:40px;line-height:40px">    <span class="b1">]</span>:</div><div style="position:absolute;left:0;top:1200px;white-space:pre;height:40px;line-height:40px">        <span class="v">algorand</span>.<span class="v">send</span>.<span class="f">payment</span><span class="b1">(</span></div><div style="position:absolute;left:0;top:1240px;white-space:pre;height:40px;line-height:40px">            <span class="ty">algokit_utils</span>.<span class="ty">PaymentParams</span><span class="b2">(</span></div><div style="position:absolute;left:0;top:1280px;white-space:pre;height:40px;line-height:40px">                <span class="v">amount</span>=<span class="ty">algokit_utils</span>.<span class="ty">AlgoAmount</span><span class="b3">(</span><span class="v">algo</span>=<span class="n">1</span><span class="b3">)</span>,</div><div style="position:absolute;left:0;top:1320px;white-space:pre;height:40px;line-height:40px">                <span class="v">sender</span>=<span class="v">deployer_</span>.<span class="v">address</span>,</div><div style="position:absolute;left:0;top:1360px;white-space:pre;height:40px;line-height:40px">                <span class="v">receiver</span>=<span class="v">app_client</span>.<span class="v">app_address</span>,</div><div style="position:absolute;left:0;top:1400px;white-space:pre;height:40px;line-height:40px">            <span class="b2">)</span></div><div style="position:absolute;left:0;top:1440px;white-space:pre;height:40px;line-height:40px">        <span class="b1">)</span></div><div style="position:absolute;left:0;top:1520px;white-space:pre;height:40px;line-height:40px">    <span class="v">name</span> = <span class="s">&quot;world&quot;</span></div><div style="position:absolute;left:0;top:1560px;white-space:pre;height:40px;line-height:40px">    <span class="v">response</span> = <span class="v">app_client</span>.<span class="v">send</span>.<span class="f">hello</span><span class="b1">(</span><span class="v">args</span>=<span class="ty">HelloArgs</span><span class="b2">(</span><span class="v">name</span>=<span class="v">name</span><span class="b2">)</span><span class="b1">)</span></div><div style="position:absolute;left:0;top:1600px;white-space:pre;height:40px;line-height:40px">    <span class="v">logger</span>.<span class="f">info</span><span class="b1">(</span></div><div style="position:absolute;left:0;top:1640px;white-space:pre;height:40px;line-height:40px">        <span class="k">f</span><span class="s">&quot;Called hello on </span><span class="b2">{</span><span class="v">app_client</span>.<span class="v">app_name</span><span class="b2">}</span><span class="s"> (</span><span class="b2">{</span><span class="v">app_client</span>.<span class="v">app_id</span><span class="b2">}</span><span class="s">) &quot;</span></div><div style="position:absolute;left:0;top:1680px;white-space:pre;height:40px;line-height:40px">        <span class="k">f</span><span class="s">&quot;with name=</span><span class="b2">{</span><span class="v">name</span><span class="b2">}</span><span class="s">, received: </span><span class="b2">{</span><span class="v">response</span>.<span class="v">abi_return</span><span class="b2">}</span><span class="s">&quot;</span></div><div style="position:absolute;left:0;top:1720px;white-space:pre;height:40px;line-height:40px">    <span class="b1">)</span></div></div>
<div class="a" style="left:2990px;top:216px;width:2px;height:1614px;background:#141414"></div>
<div class="a" style="left:2992px;top:218px;width:32px;height:4px;background:#a0a0a0"></div>
<div class="a" style="left:2990px;top:349px;width:34px;height:741px;background:#434343"></div>
<div class="a" style="left:3014px;top:830px;width:10px;height:19px;background:#c8c280"></div>
<svg style="left:0;top:0" width="1" height="1"><g transform="translate(671.5,1284.9)">
<ellipse cx="0" cy="15" rx="15" ry="5.5" fill="#b9d3d6"/>
<path d="M-17 -9 L-8 -12 L0 -9 L8 -12 L17 -9 V12 L8 15 L0 12 L-8 15 L-17 12 Z" fill="#f3dc8c" stroke="#b8692a" stroke-width="1.8" stroke-linejoin="round"/>
<path d="M-8 -12 V15 M8 -12 V15 M0 -9 V12" stroke="#b8692a" stroke-width="1.5"/>
<path d="M-16 3 C-10 -4 -4 -3 0 1 C4 5 9 6 16 -4" stroke="#8b6a2b" stroke-width="1.4" stroke-dasharray="2.5 2" fill="none"/>
<path d="M0 -2 C-4 -7 -7 -10 -7 -14 A7 7 0 0 1 7 -14 C7 -10 4 -7 0 -2 Z" fill="#f7a8b0" stroke="#8e3b4a" stroke-width="1.6"/>
<circle cx="0" cy="-14.5" r="2.4" fill="#fff"/>
</g></svg>
</body></html>
